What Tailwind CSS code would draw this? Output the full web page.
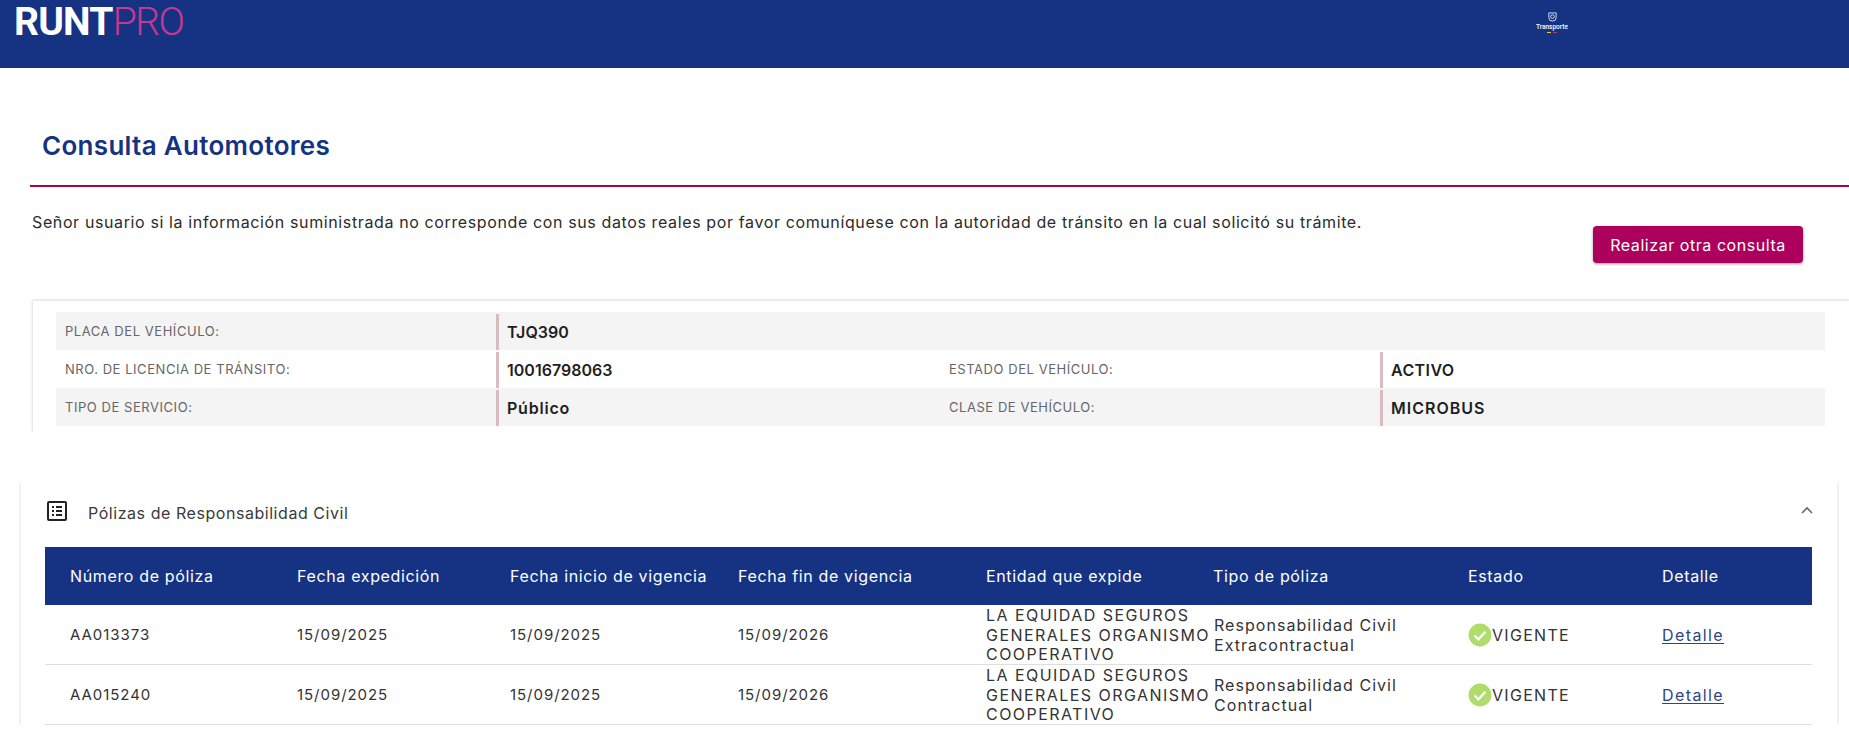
<!DOCTYPE html>
<html lang="es">
<head>
<meta charset="utf-8">
<title>Consulta Automotores</title>
<script src="https://cdn.jsdelivr.net/npm/@tailwindcss/browser@4"></script>
</head>
<body class="bg-white h-[746px] overflow-hidden font-['Inter',sans-serif] text-[#2b2b2b]">
<header class="h-[68px] bg-[#163283] flex items-start justify-between">
  <div class="ml-[14px] mt-[3px] font-['Roboto',sans-serif] text-[39px] leading-[38px]"><span class="font-bold text-white tracking-[-0.8px]">RUNT</span><span class="font-light text-[#c8388f] tracking-[-1.5px]">PRO</span></div>
  <div class="mr-[282px] mt-[12px] w-[30px] flex flex-col items-center">
    <svg width="11" height="11" viewBox="0 0 12 12" fill="none" stroke="#dfe6f5" stroke-width="1"><path d="M2 1h8v5a4 4 0 0 1-8 0z"/><circle cx="6" cy="5" r="2"/></svg>
    <span class="font-['Roboto',sans-serif] font-medium text-[6.5px] leading-[8px] text-white whitespace-nowrap">Transporte</span>
    <div class="flex mt-px"><span class="w-[4px] h-px bg-[#e8c84a]"></span><span class="w-[2px] h-px bg-[#163283]"></span><span class="w-[4px] h-px bg-[#c8384f]"></span></div>
  </div>
</header>
<main>
  <h1 class="ml-[42px] mt-[61px] text-[26px] leading-[34px] font-semibold tracking-[0.3px] text-[#163283]">Consulta Automotores</h1>
  <div class="ml-[30px] mt-[22px] h-[2px] bg-[#a3054f]"></div>
  <div class="flex justify-between items-start h-[112px]">
    <p class="ml-[32px] mt-[24px] text-[16px] leading-[22px] tracking-[0.62px] text-[#2b2b2b]">Señor usuario si la información suministrada no corresponde con sus datos reales por favor comuníquese con la autoridad de tránsito en la cual solicitó su trámite.</p>
    <button class="mr-[46px] mt-[39px] w-[210px] h-[37px] rounded bg-[#ad005c] text-white text-[16px] tracking-[0.55px] shadow-[0_1px_3px_rgba(0,0,0,0.4)]">Realizar otra consulta</button>
  </div>
  <section class="ml-[33px] h-[134px] border-t-2 border-[#ececec] shadow-[-2px_0_2px_-1px_rgba(0,0,0,0.14)] pt-[11px] pl-[23px] pr-[24px]">
    <div class="h-[38px] bg-[#f4f4f4] flex items-center">
      <span class="w-[440px] pl-[9px] pt-[2px] text-[13px] tracking-[0.55px] text-[#666]">PLACA DEL VEHÍCULO:</span>
      <span class="h-[36px] self-end border-l-[3px] border-[#d8bcc2] pl-[8px] leading-[36px] text-[16px] font-semibold text-[#1f1f1f]">TJQ390</span>
    </div>
    <div class="h-[38px] flex items-center">
      <span class="w-[440px] pl-[9px] pt-[2px] text-[13px] tracking-[0.55px] text-[#666]">NRO. DE LICENCIA DE TRÁNSITO:</span>
      <span class="w-[453px] h-[36px] self-end border-l-[3px] border-[#d8bcc2] pl-[8px] leading-[36px] text-[16px] font-semibold text-[#1f1f1f]">10016798063</span>
      <span class="w-[431px] pt-[2px] text-[13px] tracking-[0.55px] text-[#666]">ESTADO DEL VEHÍCULO:</span>
      <span class="h-[36px] self-end border-l-[3px] border-[#d8bcc2] pl-[8px] leading-[36px] text-[16px] tracking-[0.4px] font-semibold text-[#1f1f1f]">ACTIVO</span>
    </div>
    <div class="h-[38px] bg-[#f4f4f4] flex items-center">
      <span class="w-[440px] pl-[9px] pt-[2px] text-[13px] tracking-[0.55px] text-[#666]">TIPO DE SERVICIO:</span>
      <span class="w-[453px] h-[36px] self-end border-l-[3px] border-[#d8bcc2] pl-[8px] leading-[36px] text-[16px] tracking-[0.8px] font-semibold text-[#1f1f1f]">Público</span>
      <span class="w-[431px] pt-[2px] text-[13px] tracking-[0.55px] text-[#666]">CLASE DE VEHÍCULO:</span>
      <span class="h-[36px] self-end border-l-[3px] border-[#d8bcc2] pl-[8px] leading-[36px] text-[16px] tracking-[1px] font-semibold text-[#1f1f1f]">MICROBUS</span>
    </div>
  </section>
  <section class="ml-[19px] mr-[10px] mt-[50px] h-[241px] border-x-2 border-[#f1f1f1] pl-[24px] pr-[25px]">
    <div class="h-[64px] flex items-center relative">
      <svg class="ml-[2px] mt-[-8px]" width="20" height="20" viewBox="0 0 20 20" fill="none" stroke="#222" stroke-width="2"><rect x="1" y="1" width="18" height="18" rx="1"/><path d="M5 6h2M9 6h6M5 10h2M9 10h6M5 14h2M9 14h6"/></svg>
      <span class="ml-[21px] mb-[4px] text-[16px] tracking-[0.55px] text-[#3a3a3a]">Pólizas de Responsabilidad Civil</span>
      <svg class="absolute right-[-2px] top-[22px]" width="14" height="10" viewBox="0 0 14 10" fill="none" stroke="#666" stroke-width="1.6"><path d="M2 8l5-5 5 5"/></svg>
    </div>
    <div class="grid grid-cols-[227px_213px_228px_248px_227px_255px_194px_150px] pl-[25px] h-[58px] items-center bg-[#163283] text-white text-[16px] tracking-[0.65px]">
      <span>Número de póliza</span><span>Fecha expedición</span><span>Fecha inicio de vigencia</span><span>Fecha fin de vigencia</span><span>Entidad que expide</span><span>Tipo de póliza</span><span>Estado</span><span>Detalle</span>
    </div>
    <div class="grid grid-cols-[227px_213px_228px_248px_227px_255px_194px_150px] pl-[25px] h-[60px] items-center border-b border-[#dedede] text-[15px] tracking-[0.95px] text-[#333]">
      <span>AA013373</span><span>15/09/2025</span><span>15/09/2025</span><span>15/09/2026</span>
      <span class="text-[16px] tracking-[1.45px] leading-[19.5px] pt-px">LA EQUIDAD SEGUROS GENERALES ORGANISMO COOPERATIVO</span>
      <span class="text-[16px] tracking-[1.05px] leading-[20px] pl-px">Responsabilidad Civil Extracontractual</span>
      <span class="flex items-center"><svg width="24" height="24" viewBox="0 0 22 22"><circle cx="11" cy="11" r="10.5" fill="#aedd6c"/><path d="M6 11.5l3.5 3.5 6.5-7" fill="none" stroke="#fff" stroke-width="2"/></svg><span class="text-[16px] tracking-[1.3px]">VIGENTE</span></span>
      <a href="#" class="underline underline-offset-2 text-[16px] tracking-[1.4px] text-[#2b4585]">Detalle</a>
    </div>
    <div class="grid grid-cols-[227px_213px_228px_248px_227px_255px_194px_150px] pl-[25px] h-[60px] items-center border-b border-[#dedede] text-[15px] tracking-[0.95px] text-[#333]">
      <span>AA015240</span><span>15/09/2025</span><span>15/09/2025</span><span>15/09/2026</span>
      <span class="text-[16px] tracking-[1.45px] leading-[19.5px] pt-px">LA EQUIDAD SEGUROS GENERALES ORGANISMO COOPERATIVO</span>
      <span class="text-[16px] tracking-[1.05px] leading-[20px] pl-px">Responsabilidad Civil Contractual</span>
      <span class="flex items-center"><svg width="24" height="24" viewBox="0 0 22 22"><circle cx="11" cy="11" r="10.5" fill="#aedd6c"/><path d="M6 11.5l3.5 3.5 6.5-7" fill="none" stroke="#fff" stroke-width="2"/></svg><span class="text-[16px] tracking-[1.3px]">VIGENTE</span></span>
      <a href="#" class="underline underline-offset-2 text-[16px] tracking-[1.4px] text-[#2b4585]">Detalle</a>
    </div>
  </section>
</main>
</body>
</html>
